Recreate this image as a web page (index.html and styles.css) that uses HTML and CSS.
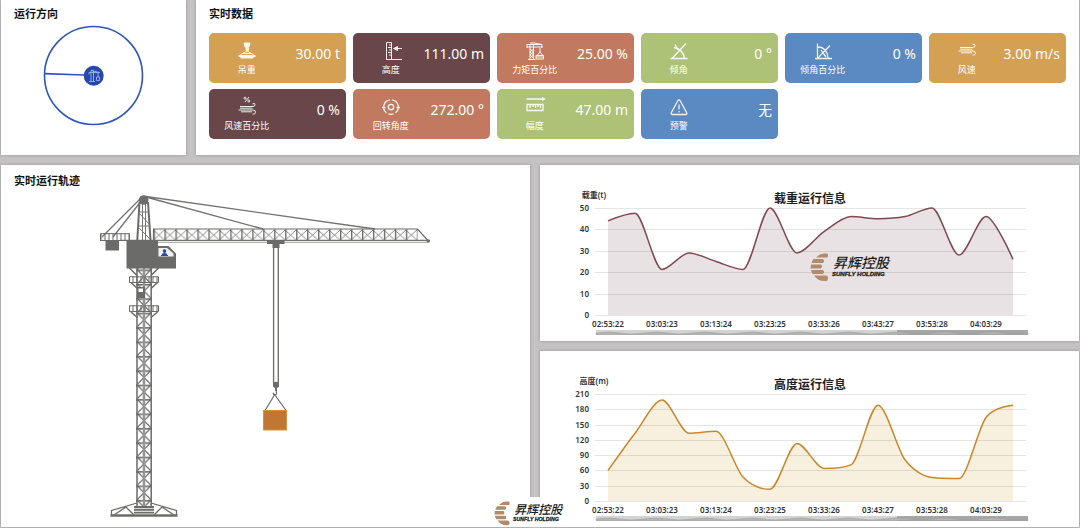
FILE: index.html
```html
<!DOCTYPE html>
<html lang="zh-CN">
<head>
<meta charset="utf-8">
<meta name="viewport" content="width=device-width, initial-scale=1">
<title>塔机实时监控</title>
<link rel="stylesheet" href="styles.css">
</head>
<body>
<main class="dashboard">
  <div class="row row-top">
    <section class="panel">
      <h2 class="panel-title">运行方向</h2>
      <svg class="drawing" viewBox="1 22 185 130" role="img" aria-label="运行方向">
        <circle cx="93.500" cy="75.500" r="49" fill="none" stroke="#2c55bd" stroke-width="1.600"/>
        <path d="M44.500 73.600L84 75" stroke="#2c55bd" stroke-width="1.600"/>
        <circle cx="93.700" cy="75.800" r="10" fill="#2549ae"/>
        <g fill="none" stroke="#9fb3e6" stroke-width=".9">
          <path d="M91 81V70.500h2.500V81M89 72.500h10.500M89 72.500v2M91 70.500l9 2M98 73v4M96.500 77h3v3.500h-3zM89 81.500h6"/>
        </g>
      </svg>
    </section>

    <section class="panel">
      <h2 class="panel-title">实时数据</h2>
      <div class="cards">
        <article class="card gold">
          <div class="card-head">
            <svg class="icon" viewBox="0 0 20 20"><path d="M7 2h6l-1 4h-4zM9 6h2v3H9z" fill="currentColor"/><path d="M8.500 5.500l3.500 2-1 2.500H9M10 10l-7 4M10 10l7 4M6 12.500h8"/><path d="M1.500 14h17v2h-2v1.500h-13V16h-2z" fill="currentColor" stroke="none"/></svg>
            <span class="label">吊重</span>
          </div>
          <span class="value">30.00 t</span>
        </article>
        <article class="card plum">
          <div class="card-head">
            <svg class="icon" viewBox="0 0 20 20"><path d="M5.500 1.500h5v17h-5zM5.500 18.500H21M8 4h2M7 6.500h3M8 9h2M7 11.500h3M8 14h2M13 7.500h8"/><path d="M12.500 7.500l4-2v4z" fill="currentColor"/></svg>
            <span class="label">高度</span>
          </div>
          <span class="value">111.00 m</span>
        </article>
        <article class="card clay">
          <div class="card-head">
            <svg class="icon" viewBox="0 0 20 20"><path d="M5 18V3M8.500 18V3M2 3.500h15M2 6h15M2 3v4M5 2h4l8 1.500V7M5 8l3.500 3L5 14l3.500 3M8.500 8L5 11l3.500 3L5 17M3 18.500h7.500M15 7v4M12.500 14l2.500-3 2.500 3M11 14.500h7.500v3.500H11zM11 16h7.500"/></svg>
            <span class="label">力矩百分比</span>
          </div>
          <span class="value">25.00 %</span>
        </article>
        <article class="card green">
          <div class="card-head">
            <svg class="icon thick" viewBox="0 0 20 20"><path d="M1.500 17.500h17M3.500 17L17 2.500M5 6.500c6 1 9.500 5 10.500 10.500M6 3.500L9 9"/></svg>
            <span class="label">倾角</span>
          </div>
          <span class="value">0 °</span>
        </article>
        <article class="card blue">
          <div class="card-head">
            <svg class="icon thick" viewBox="0 0 20 20"><path d="M2 17.500h17M4.500 2.500v15L17 4.500M5 6c6 0 10 5 10 11M8 9l5 7"/></svg>
            <span class="label">倾角百分比</span>
          </div>
          <span class="value">0 %</span>
        </article>
        <article class="card gold">
          <div class="card-head">
            <svg class="icon" viewBox="0 0 20 20"><path d="M3 6.500h12M1.500 10H16M3 8.200h12.500M4 11.800h11M15 6.500h1q2 0 2-2t-2.500-1M16 10q3 .3 2.500 2.500t-3 1.500"/></svg>
            <span class="label">风速</span>
          </div>
          <span class="value">3.00 m/s</span>
        </article>
        <article class="card plum">
          <div class="card-head">
            <svg class="icon" viewBox="0 0 20 20"><path d="M8 5l4-5"/><circle cx="8" cy="1.200" r="1"/><circle cx="11.800" cy="4" r="1"/><path d="M3 9.500h12M1.500 13H16M3 11.200h12.500M4 14.800h11M15 9.500h1q2 0 2-2t-2.500-.5M16 13q3 .3 2.500 2.500t-3 1.500"/></svg>
            <span class="label">风速百分比</span>
          </div>
          <span class="value">0 %</span>
        </article>
        <article class="card clay">
          <div class="card-head">
            <svg class="icon thick" viewBox="0 0 20 20"><circle cx="10" cy="10" r="2.700"/><path d="M5.500 15.800A7.300 7.300 0 0 1 9 2.800M11 2.800A7.300 7.300 0 0 1 14.500 15.800M7.500 16.900a7.300 7.300 0 0 0 5 0M1 10.500h3.500M15.500 10.500H19"/></svg>
            <span class="label">回转角度</span>
          </div>
          <span class="value">272.00 °</span>
        </article>
        <article class="card green">
          <div class="card-head">
            <svg class="icon thick" viewBox="0 0 20 20"><path d="M1.500 2h16M2 7.500h16v6H2zM5 8v3M8 8v2M10.500 8v3M13 8v2M15.500 8v3"/><path d="M17 0l4 2-4 2z" fill="currentColor" stroke="none"/></svg>
            <span class="label">幅度</span>
          </div>
          <span class="value">47.00 m</span>
        </article>
        <article class="card blue">
          <div class="card-head">
            <svg class="icon thick" viewBox="0 0 20 20"><path d="M10 3q.8 0 1.200.8l6.500 12q.4 1.700-1 1.700H3.300q-1.400 0-1-1.700l6.500-12Q9.200 3 10 3zM10 7.500v5M10 14v1.500"/></svg>
            <span class="label">预警</span>
          </div>
          <span class="value">无</span>
        </article>
      </div>
    </section>
  </div>

  <div class="row row-bottom">
    <section class="panel track">
      <h2 class="panel-title">实时运行轨迹</h2>
      <svg class="drawing" viewBox="1 189 529 336" role="img" aria-label="实时运行轨迹">
        <defs>
          <pattern id="mast" x="136" y="269.500" width="16" height="14.400" patternUnits="userSpaceOnUse">
            <path d="M1 0l14 14.400M15 0L1 14.400" stroke="#6b6b69" stroke-width="1.200"/>
            <path d="M0 .800h16" stroke="#6b6b69" stroke-width="1.600"/>
          </pattern>
          <pattern id="jib" x="153.500" y="229" width="10.970" height="11.500" patternUnits="userSpaceOnUse">
            <path d="M0 1l10.970 10M10.970 1L0 11" stroke="#777775" stroke-width=".9"/>
            <path d="M.700 0v11.500" stroke="#6b6b69" stroke-width="1.400"/>
          </pattern>
          <pattern id="rail" x="100.500" y="0" width="4" height="10" patternUnits="userSpaceOnUse">
            <path d="M.500 0v10" stroke="#6b6b69" stroke-width="1"/>
          </pattern>
        </defs>

        <g fill="none" stroke="#737371" stroke-width="1.300">
          <path d="M146 196.500L375 229M146 197L263 229M141 198L102 237M142 200L113 237"/>
        </g>

        <rect x="136" y="268" width="16" height="240" fill="url(#mast)"/>
        <path d="M144 268v238" stroke="#a3a3a1" stroke-width="2.600"/>
        <path d="M144 268v238" stroke="#777775" stroke-width=".7"/>
        <path d="M137 268v238M151.200 268v238" stroke="#6b6b69" stroke-width="1.500"/>

        <path d="M139.500 202L137.300 240M148 202L150.500 240" stroke="#6b6b69" stroke-width="2"/>
        <path d="M142.500 203v37M145.500 203v37M139 212h10M139 226h11M139 213l11 12M138 227l12 12" fill="none" stroke="#777775" stroke-width="1"/>
        <circle cx="143.700" cy="200" r="4.800" fill="#6b6b69"/>

        <rect x="153.500" y="229" width="264" height="11.500" fill="url(#jib)"/>
        <path d="M153 229h264.500L428 240.500M153.500 229v11" fill="none" stroke="#6b6b69" stroke-width="1.200"/>
        <path d="M120 240.300h308" stroke="#737371" stroke-width="1.300"/>
        <path d="M150 242.300h278" stroke="#b4b4ae" stroke-width="1.200"/>
        <circle cx="428.300" cy="241" r="1.700" fill="#6b6b69"/>

        <rect x="100.500" y="233.500" width="29" height="6.500" fill="url(#rail)"/>
        <path d="M100.500 240v-6.300h29v6.300M100 240.500h30" fill="none" stroke="#6b6b69"/>
        <rect x="105.500" y="240" width="13.500" height="10.500" fill="#6b6b69"/>

        <path d="M126.500 240H158v6h10.500l7.500 7.500v15h-49.500z" fill="#6b6b69"/>
        <path d="M158.500 248h8.500l6.500 5.500v3h-15z" fill="#f1f2f4"/>
        <path d="M164.500 249.200a1.600 1.600 0 0 1 1.200 2.800l-.4 1.500h1.700v1.500h1v1h-7v-1h1v-1.500h1.700l-.4-1.500a1.600 1.600 0 0 1 1.200-2.800z" fill="#2448b4"/>

        <path d="M129.500 268l7.500 7.500M158.500 268l-7.500 7.500M131 282.500l6.500 6M157.500 282.500l-6.500 6M131 312l6.500 5.500M157.500 312l-6.500 5.500" stroke="#6b6b69" stroke-width="1.600"/>
        <rect x="129" y="276.500" width="29.500" height="6" fill="url(#rail)"/>
        <path d="M129.500 282.500v-5.700h29v5.700zM129.500 311.500v-5.700h29v5.700z" fill="none" stroke="#6b6b69"/>
        <rect x="129" y="305.500" width="29.500" height="6" fill="url(#rail)"/>
        <rect x="137" y="287" width="8" height="11" fill="#6b6b69"/>
        <rect x="138.500" y="288.500" width="4.500" height="3.500" fill="#fff"/>

        <path d="M111.500 515v-4.500l25.500-7.500M176.500 515v-4.500L151 503M114 515l12-8 8 8M174 515l-12-8-8 8" fill="none" stroke="#6b6b69" stroke-width="1.300"/>
        <path d="M110.500 515.500h67" stroke="#6b6b69" stroke-width="2.600"/>
        <path d="M134 507h20M134 509.800h20M134 512.600h20" stroke="#6b6b69" stroke-width="1.900"/>

        <path d="M267 240h17.500v4H279.500v4h-7v-4H267z" fill="#6b6b69"/>
        <path d="M273.600 247v136M278.300 247v136" stroke="#737371" stroke-width="1.400"/>
        <path d="M273 383q3-2.500 6 0v3.500q-1 1-2 1.500v3h-2v-3q-1-.5-2-1.500z" fill="#6b6b69"/>
        <path d="M276 391q1.500 3.500-.8 3.700-2 0-2-2M274.500 395L265 410.500M275 395l11 15.500" fill="none" stroke="#6b6b69" stroke-width="1.200"/>
        <rect x="263.500" y="410.500" width="23" height="19.500" fill="#bf7731" stroke="#cf9538"/>
      </svg>
    </section>

    <div class="charts">
      <section class="panel chart-panel">
        <svg class="chart" id="load-chart" viewBox="0 0 539 174" role="img" aria-label="载重运行信息"></svg>
        <svg class="brand brand-large" viewBox="0 0 82 30" role="img" aria-label="昇辉控股 SUNFLY HOLDING">
          <g class="brand-mark"><path d="M8 3q2-2.500 6-2.500h3q1 0 1 2t-1 2H6zM3.500 6H13q2 2 0 4H1.500Q2 8 3.500 6zM1 11.500h10q2 2 0 4H.5zM1 17h12q2 2 0 4H2.500Q1.500 19 1 17zM4 22.500h12q2 0 2 3 0 2.500-2 2.500h-2q-6 0-10-5.500z"/></g>
          <text class="brand-cn" x="23" y="15">昇辉控股</text>
          <text class="brand-en" x="22" y="23">SUNFLY HOLDING</text>
        </svg>
      </section>
      <section class="panel chart-panel">
        <svg class="chart" id="height-chart" viewBox="0 0 539 174" role="img" aria-label="高度运行信息"></svg>
      </section>
    </div>

    <div class="watermark">
      <svg class="brand" viewBox="0 0 82 30" role="img" aria-label="昇辉控股 SUNFLY HOLDING">
        <g class="brand-mark"><path d="M8 3q2-2.500 6-2.500h3q1 0 1 2t-1 2H6zM3.500 6H13q2 2 0 4H1.500Q2 8 3.500 6zM1 11.500h10q2 2 0 4H.5zM1 17h12q2 2 0 4H2.500Q1.500 19 1 17zM4 22.500h12q2 0 2 3 0 2.500-2 2.500h-2q-6 0-10-5.500z"/></g>
        <text class="brand-cn" x="23" y="15">昇辉控股</text>
        <text class="brand-en" x="22" y="23">SUNFLY HOLDING</text>
      </svg>
    </div>
  </div>
</main>
<script src="charts.js"></script>
</body>
</html>
```
FILE: styles.css
```css
* {
  box-sizing: border-box;
}

body {
  margin: 0;
  background: #c4c2c3;
  color: #111;
  font-family: "Noto Sans", "Noto Sans CJK SC", sans-serif;
}

.dashboard {
  display: flex;
  flex-direction: column;
  gap: 10px;
  min-height: 100vh;
  padding: 0 1px 1px;
}

.row {
  display: grid;
  gap: 10px;
}

.row-top {
  grid-template-columns: 185fr 883fr;
}

.row-bottom {
  position: relative;
  flex: 1;
  grid-template-columns: 529fr 539fr;
}

.panel {
  min-width: 0;
  background: #fff;
  box-shadow: 0 0 3px rgba(0, 0, 0, 0.25);
}

.panel-title {
  margin: 0;
  padding: 6px 13px 0;
  font-size: 11px;
  line-height: 16px;
  font-weight: 700;
}

.track .panel-title {
  padding-top: 8px;
}

.drawing,
.chart {
  display: block;
  width: 100%;
}

.cards {
  display: grid;
  grid-template-columns: repeat(6, minmax(0, 1fr));
  gap: 6px 7px;
  padding: 11px 13px 16px;
}

.card {
  display: grid;
  grid-template-columns: 55% 45%;
  height: 50px;
  border-radius: 5px;
  color: #fff;
}

.gold {
  background: #d3a054;
}

.plum {
  background: #684649;
}

.clay {
  background: #c17a5f;
}

.green {
  background: #adc276;
}

.blue {
  background: #5b89c1;
}

.card-head {
  display: flex;
  flex-direction: column;
  align-items: center;
  padding-top: 8px;
}

.icon {
  width: 20px;
  height: 20px;
  overflow: visible;
  fill: none;
  stroke: currentColor;
  stroke-width: 1;
  opacity: 0.9;
}

.icon.thick {
  stroke-width: 1.3;
}

.label {
  font-size: 9px;
  line-height: 18px;
  white-space: nowrap;
}

.value {
  justify-self: end;
  padding: 11px 6px 0 0;
  font-size: 14px;
  line-height: 20px;
  white-space: nowrap;
}

.charts {
  display: flex;
  flex-direction: column;
  gap: 10px;
}

.chart-panel {
  position: relative;
  flex: 1;
}

.chart text {
  font-size: 8px;
  font-weight: 600;
  fill: #333;
}

.chart .chart-title {
  font-size: 12px;
  font-weight: 700;
  fill: #222;
}

.grid-line {
  stroke: #000;
  stroke-opacity: 0.1;
}

.line {
  fill: none;
  stroke-width: 1.5;
}

.area-load {
  fill: #e8e2e4;
}

.line-load {
  stroke: #80494e;
}

.area-height {
  fill: #f7f0df;
}

.line-height {
  stroke: #cb862b;
}

.zoom-track {
  fill: #d3d3d3;
}

.zoom-window {
  fill: #a6a6a6;
}

.zoom-wave {
  fill: #b5b5b5;
  stroke: #999;
  stroke-width: 0.5;
}

.brand {
  display: block;
  width: 71px;
}

.brand-large {
  position: absolute;
  left: 50%;
  top: 50%;
  width: 82px;
}

.brand-mark {
  fill: #b08c6c;
}

.brand-cn {
  font-family: "Noto Sans CJK SC", sans-serif;
  font-size: 14px;
  font-style: italic;
  font-weight: 500;
  fill: #201a18;
}

.brand-en {
  font-family: "Liberation Sans", sans-serif;
  font-size: 6px;
  font-style: italic;
  font-weight: 700;
  fill: #201a18;
  stroke: #201a18;
  stroke-width: 0.3;
}

.watermark {
  position: absolute;
  left: calc(50% - 96px);
  bottom: 0;
  padding: 4px 14px 0 50px;
  background: #fff;
}
```
FILE: charts.js
```js
const SVG_NS = "http://www.w3.org/2000/svg";
const PLOT = { left: 55, right: 486, top: 43, bottom: 150, firstX: 68, stepX: 27 };
const TIMES = ["02:53:22", "03:03:23", "03:13:24", "03:23:25", "03:33:26", "03:43:27", "03:53:28", "04:03:29"];

function add(parent, name, attrs, text) {
  const node = document.createElementNS(SVG_NS, name);
  for (const key in attrs) node.setAttribute(key, attrs[key]);
  if (text !== undefined) node.textContent = text;
  parent.appendChild(node);
}

function clamp(value, a, b) {
  return Math.max(Math.min(a, b), Math.min(Math.max(a, b), value));
}

// Smooth curve whose control points stay between neighbouring samples.
function smoothPath(points) {
  const tension = 0.15;
  let path = `M${points[0]}`;
  let out = points[0];
  for (let i = 1; i < points.length; i++) {
    const prev = points[i - 1];
    const cur = points[i];
    const next = points[i + 1];
    let before = cur;
    let after = cur;
    if (next) {
      after = [0, 1].map(k => clamp(cur[k] + (next[k] - prev[k]) * tension, cur[k], next[k]));
      before = [0, 1].map(k => clamp(2 * cur[k] - after[k], prev[k], cur[k]));
      after = [0, 1].map(k => 2 * cur[k] - before[k]);
    }
    path += `C${out} ${before} ${cur}`;
    out = after;
  }
  return path;
}

function drawChart(id, options) {
  const svg = document.getElementById(id);
  const height = PLOT.bottom - PLOT.top;
  const points = options.values.map((v, i) => [
    PLOT.firstX + i * PLOT.stepX,
    PLOT.bottom - v / options.max * height
  ]);
  const path = smoothPath(points);

  add(svg, "path", { class: `area-${options.kind}`, d: `${path}V${PLOT.bottom}H${PLOT.firstX}Z` });
  for (let v = 0; v <= options.max; v += options.step) {
    const y = Math.round(PLOT.bottom - v / options.max * height);
    add(svg, "path", { class: "grid-line", d: `M${PLOT.left} ${y + 0.5}H${PLOT.right}` });
    add(svg, "text", { x: 49, y: y + 3, "text-anchor": "end" }, v);
  }
  add(svg, "path", { class: `line line-${options.kind}`, d: path });
  add(svg, "text", { x: 54, y: 33, "text-anchor": "middle" }, options.unit);
  add(svg, "text", { class: "chart-title", x: 270, y: 38, "text-anchor": "middle" }, options.title);
  TIMES.forEach((time, i) => {
    add(svg, "text", { x: PLOT.firstX + i * 2 * PLOT.stepX, y: 162, "text-anchor": "middle" }, time);
  });

  add(svg, "rect", { class: "zoom-track", x: 56, y: 165, width: 432, height: 5 });
  add(svg, "rect", { class: "zoom-window", x: 357, y: 165, width: 131, height: 5 });
  add(svg, "path", { class: "zoom-wave", d: "M56 168q14-2 24 0t24 0 24 0 24 0 24 0 24 0 24 0 24 0 24 0 24 0 24 0 24 0 24 0 24 0 24 0 24 0 24 0 24 0V169.500H56Z" });
}

drawChart("load-chart", {
  kind: "load", title: "载重运行信息", unit: "载重(t)", max: 50, step: 10,
  values: [44, 47.5, 21.3, 29, 25, 21.3, 50, 29, 39, 46, 45, 46, 50, 28, 46, 26]
});

drawChart("height-chart", {
  kind: "height", title: "高度运行信息", unit: "高度(m)", max: 210, step: 30,
  values: [60, 133, 198, 133, 137, 47, 23, 113, 64, 71, 188, 81, 46, 44, 164, 188]
});
```
